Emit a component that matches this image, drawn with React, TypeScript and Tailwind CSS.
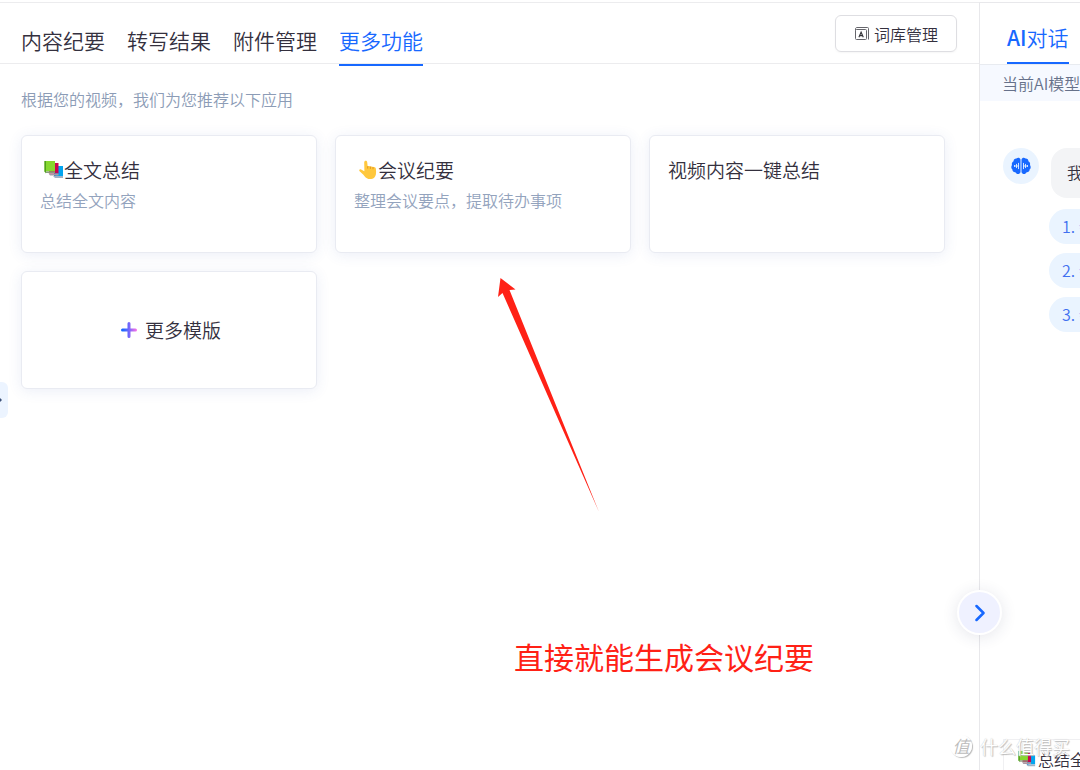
import React from "react";
import type { ReactNode } from "react";

const tabs = ["内容纪要", "转写结果", "附件管理", "更多功能"];

function BooksIcon({ className }: { className: string }) {
  return (
    <svg viewBox="0 0 20 20" className={className} aria-hidden="true">
      <path d="M10 6h9v10h-9z" fill="#03a5ef" />
      <path d="M9 16h10v2H11z" fill="#9fb3c8" />
      <path d="M10 6h1.500v10H10z" fill="#0078c8" />
      <path d="M5 3h9.500v10.500H5z" fill="#c9054f" />
      <path d="M4.500 13.500h10V15.500H6z" fill="#a99aa5" />
      <path d="M.5 1H11v10.500H.5z" fill="#86d72f" />
      <path d="M.5 1H2v12.500L.5 11.500z" fill="#4f9e1c" />
      <path d="M2 11.500h9v1.500H2z" fill="#8a9a80" />
    </svg>
  );
}

function HandIcon() {
  return (
    <svg viewBox="0 0 20 20" className="size-5 shrink-0" aria-hidden="true">
      <path
        d="M6.200 2.400C6.200.3 9 .3 9.200 2.300l.5 4.200c.8-.8 2.200-.6 2.700.3.900-.7 2.200-.4 2.600.5 1.400-.6 2.700.2 2.900 1.700.5 4.300.1 6.600-1.500 8.400-1.500 1.700-4 2-6 1.500-2.200-.5-3.400-2.200-5-4.200L1.600 11.300c-1-1.300.2-2.400 1.500-1.900l3.300 1.900z"
        fill="#ffc83d"
      />
      <path
        d="M9.700 6.500v1.700M12.400 6.800v1.700M15 7.300v1.500"
        stroke="#e08c14"
        strokeWidth=".8"
        strokeLinecap="round"
        fill="none"
      />
    </svg>
  );
}

function DictionaryIcon() {
  return (
    <svg viewBox="0 0 16 16" className="size-4 shrink-0" fill="none" stroke="#66666c" aria-hidden="true">
      <rect x="1.500" y="3.500" width="11" height="10" rx="1" />
      <path d="M1.500 4.500V3c0-1 .6-1.500 1.500-1.500h10.500c.7 0 1 .3 1 1v11" />
      <path d="M4.900 11.200 7.100 6.200 9.300 11.200M5.700 9.600h2.800" stroke="#333338" strokeWidth="1.100" />
    </svg>
  );
}

function BrainIcon() {
  return (
    <svg viewBox="0 0 20 18" className="h-[18px] w-5" aria-hidden="true">
      <path
        d="M9.500 2.600C9 .6 6.800.2 5.500 1.500 3.800 1.300 2.400 2.600 2.600 4.200 1 5 .5 6.700 1 8 0 9.500 0 11.500 1.400 12.600c0 1.800 1.400 2.900 3 2.700 1.200 2.500 4.400 2.200 5.100-.3z"
        fill="#1768ff"
      />
      <path
        d="M10.500 2.600c.5-2 2.700-2.400 4-1.100 1.700-.2 3.100 1.100 2.900 2.700 1.600.8 2.100 2.500 1.600 3.800 1 1.500 1 3.500-.4 4.600 0 1.800-1.400 2.900-3 2.700-1.200 2.500-4.400 2.200-5.100-.3z"
        fill="#1768ff"
      />
      <path
        d="M3.500 8.500v1M5.500 7.300v3.400M7.500 6.300v5.400M12.500 6.300v5.400M14.500 7.300v3.400M16.500 8.500v1M3.500 9h4M12.500 9h4"
        stroke="#e6f2ff"
        strokeWidth=".9"
        strokeLinecap="round"
      />
    </svg>
  );
}

function PlusIcon() {
  return (
    <svg viewBox="0 0 16 16" className="size-4" aria-hidden="true">
      <defs>
        <linearGradient id="plus" x1="0" y1="0" x2="1" y2="0">
          <stop offset="0.1" stopColor="#1768ff" />
          <stop offset="0.5" stopColor="#7466fb" />
          <stop offset="1" stopColor="#ff72e6" />
        </linearGradient>
      </defs>
      <path
        d="M6.500 1.500a1.500 1.500 0 0 1 3 0v5h5a1.500 1.500 0 0 1 0 3h-5v5a1.500 1.500 0 0 1-3 0v-5h-5a1.500 1.500 0 0 1 0-3h5z"
        fill="url(#plus)"
      />
    </svg>
  );
}

function Card({ icon, title, text }: { icon?: ReactNode; title: string; text?: string }) {
  return (
    <button
      type="button"
      className="flex h-[118px] flex-col items-start rounded-md border border-[#e9ebf2] bg-white px-[18px] pt-5 text-left shadow-[0_2px_14px_rgba(60,90,180,0.1)]"
    >
      <span className="flex items-center text-[19px] leading-7">
        {icon && <span className="flex w-6 shrink-0 justify-end">{icon}</span>}
        {title}
      </span>
      {text && <span className="mt-1 text-base leading-6 text-[#93a3bd]">{text}</span>}
    </button>
  );
}

export default function App() {
  return (
    <div className="relative flex min-h-screen overflow-hidden border-t-2 border-white bg-white font-['Noto_Sans_CJK_SC',sans-serif] font-[350] text-[#34303e]">
      <main className="relative min-w-0 flex-1 border-t border-[#ececee]">
        <header className="flex h-[61px] items-stretch justify-between border-b border-[#ececee] pr-[22px] pl-[21px]">
          <nav className="flex gap-[22px]">
            {tabs.map((tab) => (
              <a
                key={tab}
                href="#"
                aria-current={tab === "更多功能" ? "page" : undefined}
                className="-mb-[3px] flex items-center border-b-2 border-transparent pt-3 text-[21px] leading-8 whitespace-nowrap aria-[current=page]:border-[#1768ff] aria-[current=page]:text-[#1768ff]"
              >
                {tab}
              </a>
            ))}
          </nav>
          <button
            type="button"
            className="mt-3 flex h-[37px] items-center gap-1 rounded-md border border-[#dedee2] px-[18px] text-base shadow-[0_1px_2px_rgba(0,0,0,0.04)]"
          >
            <DictionaryIcon />
            词库管理
          </button>
        </header>

        <section className="pt-[23px] pr-[34px] pl-[21px]">
          <p className="text-base leading-6 text-[#8c9cb6]">根据您的视频，我们为您推荐以下应用</p>
          <div className="mt-6 grid grid-cols-3 gap-[18px]">
            <Card icon={<BooksIcon className="size-5" />} title="全文总结" text="总结全文内容" />
            <Card icon={<HandIcon />} title="会议纪要" text="整理会议要点，提取待办事项" />
            <Card title="视频内容一键总结" />
            <button
              type="button"
              className="flex h-[118px] items-center justify-center gap-2 rounded-md border border-[#e9ebf2] bg-white pl-1 text-[19px] leading-7 shadow-[0_2px_14px_rgba(60,90,180,0.1)]"
            >
              <PlusIcon />
              更多模版
            </button>
          </div>
        </section>

        <button
          type="button"
          aria-label="展开侧栏"
          className="absolute top-[379px] left-0 flex h-[36px] w-2 items-center overflow-hidden rounded-r-md bg-[#ecf4ff]"
        >
          <svg viewBox="0 0 2 4" className="h-1 w-0.5" aria-hidden="true">
            <path d="M0 0 2 2 0 4z" fill="#3c5078" />
          </svg>
        </button>
      </main>

      <aside className="flex w-[101px] shrink-0 flex-col overflow-hidden border-t border-l border-[#e8e8eb] whitespace-nowrap">
        <header className="flex h-[62px] items-stretch border-b border-[#e8ebf0] pl-[27px]">
          <a
            href="#"
            className="flex items-center border-b-2 border-[#1768ff] pt-2 text-[21px] leading-8 text-[#1768ff]"
          >
            <span className="font-medium">AI</span>对话
          </a>
        </header>
        <p className="bg-[#f6f9ff] py-1.5 pl-[22px] text-base leading-6 text-[#66718a]">当前AI模型</p>
        <div className="mt-[47px] flex gap-3 pl-[23px]">
          <span className="flex size-9 shrink-0 items-center justify-center rounded-full bg-[#eaf4ff]">
            <BrainIcon />
          </span>
          <p className="h-[50px] shrink-0 rounded-l-2xl bg-[#f3f4f6] px-4 text-base leading-[48px]">我</p>
        </div>
        <ol className="mt-[11px] flex flex-col gap-[9px] pl-[69px] text-base text-[#4170f0]">
          {["1. 会", "2. 会", "3. 会"].map((item) => (
            <li key={item} className="flex">
              <button
                type="button"
                className="h-[35px] w-40 shrink-0 rounded-l-full bg-[#eaf4ff] pb-0.5 pl-[13px] text-left"
              >
                {item}
              </button>
            </li>
          ))}
        </ol>
        <button
          type="button"
          className="mt-auto ml-[23px] flex h-[31px] w-40 items-center gap-0.5 border-t border-l border-[#f0f0f2] pt-2 pl-3.5 text-base leading-6"
        >
          <BooksIcon className="size-[18px] shrink-0" />
          总结全
        </button>
      </aside>

      <svg
        viewBox="0 0 104 236"
        className="pointer-events-none absolute top-[275px] left-[497px] h-[236px] w-[104px]"
        aria-hidden="true"
      >
        <path d="M3.500 1 18.500 12.500 12.500 13 102 235 5.500 16 1 20z" fill="#ff2116" />
      </svg>
      <p className="pointer-events-none absolute top-[632px] left-[514px] text-[30px] leading-[44px] font-normal text-[#ff2116]">
        直接就能生成会议纪要
      </p>

      <button
        type="button"
        aria-label="收起对话"
        className="absolute top-[588px] right-[78px] flex size-[45px] items-center justify-center rounded-full border-2 border-white bg-[#eff1ff] shadow-[0_2px_16px_rgba(40,50,90,0.12)]"
      >
        <svg viewBox="0 0 10 18" className="h-[18px] w-2.5" fill="none" aria-hidden="true">
          <path d="M1.500 2 8.500 9l-7 7" stroke="#1768ff" strokeWidth="2.500" strokeLinecap="round" strokeLinejoin="round" />
        </svg>
      </button>

      <div className="pointer-events-none absolute right-2.5 bottom-2.5 flex items-center gap-2 text-[18px] leading-7 text-white [text-shadow:1px_1px_1px_#bbb,0_0_1px_#bbb]">
        <span className="flex size-[22px] items-center justify-center rounded-full border border-white text-[17px] text-[#bbb] italic shadow-[1px_1px_1px_#bbb] [text-shadow:none]">
          值
        </span>
        什么值得买
      </div>
    </div>
  );
}
